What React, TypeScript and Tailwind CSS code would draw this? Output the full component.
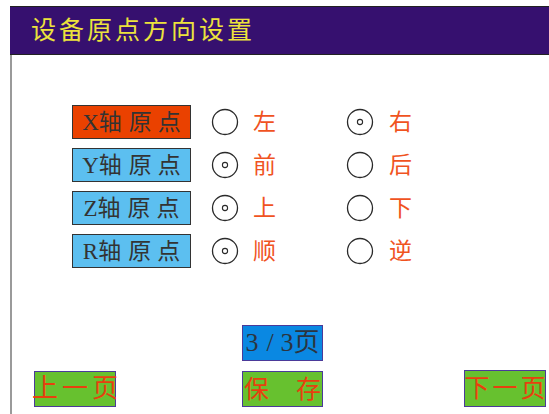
import React from "react";

const CJK = '"Liberation Serif", "Noto Sans CJK SC", sans-serif';

function Radio({ on }: { on: boolean }) {
  return (
    <svg width="28" height="28" viewBox="0 0 28 28" className="shrink-0">
      <circle cx="14" cy="14" r="12.5" fill="white" stroke="#2a2a2a" strokeWidth="1.3" />
      {on && <circle cx="14" cy="14" r="2.6" fill="white" stroke="#2a2a2a" strokeWidth="1.1" />}
    </svg>
  );
}

const rows = [
  { axis: "X", a: "左", b: "右", sel: 1, active: true },
  { axis: "Y", a: "前", b: "后", sel: 0, active: false },
  { axis: "Z", a: "上", b: "下", sel: 0, active: false },
  { axis: "R", a: "顺", b: "逆", sel: 0, active: false },
];

export default function App() {
  return (
    <div
      className="w-[549px] h-[414px] bg-white overflow-hidden pt-[6px] pl-[10px] flex flex-col"
      style={{ fontFamily: CJK }}
    >
      <div className="h-[49px] bg-[#36106f] border-y border-[#222] flex items-center pl-[21px] shrink-0">
        <span className="text-[25px] leading-none tracking-[3px] text-[#ece33c]">设备原点方向设置</span>
      </div>
      <div className="flex-1 border-l-2 border-[#9a9a9a] flex flex-col">
        <div className="mt-[50px] flex flex-col gap-[9px]">
          {rows.map((r) => (
            <div key={r.axis} className="flex items-center h-[34px]">
              <div
                className={`ml-[60px] w-[119px] h-[34px] border border-[#333] flex items-center justify-center text-[#333] text-[23px] leading-none ${
                  r.active ? "bg-[#ea4100]" : "bg-[#5cbff0]"
                }`}
              >
                <span>{r.axis}轴</span>
                <span className="ml-[7px]">原</span>
                <span className="ml-[6px]">点</span>
              </div>
              <div className="ml-[20px]">
                <Radio on={r.sel === 0} />
              </div>
              <span className="ml-[14px] text-[23px] leading-none text-[#f0531f]">{r.a}</span>
              <div className="ml-[70px]">
                <Radio on={r.sel === 1} />
              </div>
              <span className="ml-[15px] text-[23px] leading-none text-[#f0531f]">{r.b}</span>
            </div>
          ))}
        </div>
        <div className="mt-[57px] ml-[230px] w-[81px] h-[36px] bg-[#0a88e2] border border-[#4b3a99] flex items-center justify-center text-[#2c3440] text-[26px] leading-none whitespace-nowrap">
          <span>3</span>
          <span className="ml-[8px]">/</span>
          <span className="ml-[7px]">3页</span>
        </div>
        <div className="mt-[10px] flex items-start">
          <div className="ml-[22px] w-[82px] h-[36px] bg-[#67c12f] border border-[#4b3a99] flex items-center justify-center text-[#e8400e] text-[26px] leading-none whitespace-nowrap tracking-[4px]">
            <span className="-mr-[4px]">上一页</span>
          </div>
          <div className="ml-[126px] w-[81px] h-[36px] bg-[#67c12f] border border-[#4b3a99] flex items-center justify-between px-[1px] text-[#e8400e] text-[25px] leading-none">
            <span>保</span>
            <span>存</span>
          </div>
          <div className="ml-[141px] -mt-[1px] w-[82px] h-[37px] bg-[#67c12f] border border-[#4b3a99] flex items-center justify-center text-[#e8400e] text-[25px] leading-none whitespace-nowrap tracking-[3px]">
            <span className="-mr-[3px]">下一页</span>
          </div>
        </div>
      </div>
    </div>
  );
}
